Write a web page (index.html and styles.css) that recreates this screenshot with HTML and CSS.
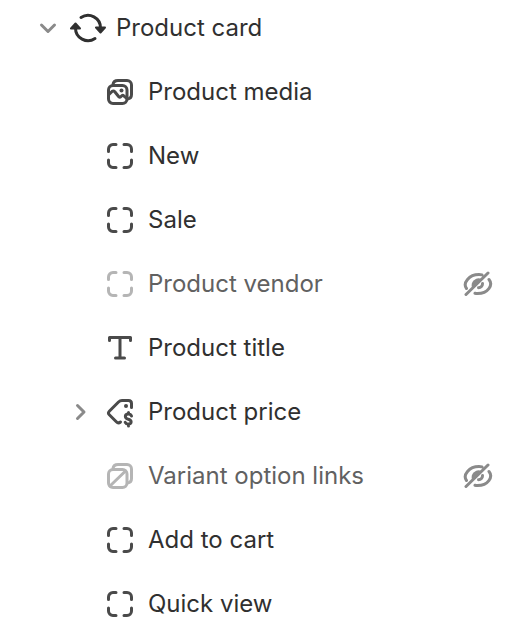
FILE: index.html
```html
<!DOCTYPE html>
<html lang="en">
<head>
    <meta charset="UTF-8">
    <meta name="viewport" content="width=device-width, initial-scale=1.0">
    <title>Product card</title>
    <link rel="stylesheet" href="styles.css">
</head>
<body>
    <!-- Shared icons -->
    <svg class="sprite" aria-hidden="true">
        <symbol id="block" viewBox="0 0 32 32">
            <path d="M4.5 11.5V9A4.5 4.5 0 0 1 9 4.5h3M20 4.5h3A4.5 4.5 0 0 1 27.5 9v2.5M27.5 20v3a4.5 4.5 0 0 1-4.5 4.5h-3M12 27.5H9A4.5 4.5 0 0 1 4.5 23v-3"/>
        </symbol>
        <symbol id="hidden" viewBox="0 0 32 32">
            <path d="M4 26.5 26 5M4.5 20.5C.5 15 7 6.500 17 6.500q1.700 0 3 .4M27 11.500C31.500 17 26 25.500 15.500 25.500q-1.500 0-2.500-.3M20.500 15.500a4 4 0 0 1-4 4.300"/>
            <path class="dot" d="M10 19.500a7 7 0 0 1 9.500-8.500z"/>
        </symbol>
    </svg>

    <ul class="tree">
        <li class="row root">
            <button class="toggle" aria-label="Collapse Product card" aria-expanded="true">
                <svg viewBox="0 0 24 24"><path d="m5.5 9 6.5 6.5L18.5 9"/></svg>
            </button>
            <svg class="icon large" viewBox="0 0 36 36">
                <path d="M11 7.500A12.500 12.500 0 0 1 30.500 18M25 28.500A12.500 12.500 0 0 1 5.500 18"/>
                <path class="head" d="M26 17.5h9l-4.500 5zM1 18.5h9l-4.500-5z"/>
            </svg>
            <span class="label">Product card</span>
        </li>
        <li>
            <ul class="children">
                <li class="row">
                    <svg class="icon" viewBox="0 0 32 32">
                        <rect x="4.5" y="9.5" width="18.5" height="18" rx="4.5"/>
                        <path d="M9 8.5q.5-4 5-4h9A4.5 4.5 0 0 1 27.5 9v9.5q0 4-4 4.5M5 18.5l3-3q1.500-1.200 2.800.3l4 5q1 1 2 0l1-1q1-1 2 0l3 2.700"/>
                        <circle class="dot" cx="17.5" cy="14.5" r="2"/>
                    </svg>
                    <span class="label">Product media</span>
                </li>
                <li class="row">
                    <svg class="icon"><use href="#block"/></svg>
                    <span class="label">New</span>
                </li>
                <li class="row">
                    <svg class="icon"><use href="#block"/></svg>
                    <span class="label">Sale</span>
                </li>
                <li class="row off">
                    <svg class="icon"><use href="#block"/></svg>
                    <span class="label">Product vendor</span>
                    <button class="eye" aria-label="Show Product vendor"><svg><use href="#hidden"/></svg></button>
                </li>
                <li class="row">
                    <svg class="icon" viewBox="0 0 32 32">
                        <path d="M5.5 8.5v-3h21v3M16 5.5V26M11.5 26h9"/>
                    </svg>
                    <span class="label">Product title</span>
                </li>
                <li class="row">
                    <button class="toggle" aria-label="Expand Product price" aria-expanded="false">
                        <svg viewBox="0 0 24 24"><path d="m9.5 5.5 6.5 6.5-6.5 6.5"/></svg>
                    </button>
                    <svg class="icon" viewBox="0 0 32 32">
                        <path d="M27.5 11.5v-4q0-3-3-3H18q-2 0-3.500 1.500L5.300 15.200q-1.800 1.800 0 3.600l7 7q2 2 4.200.2"/>
                        <circle class="dot" cx="22" cy="10" r="2"/>
                        <path d="M27.5 20q-.8-2-3-2c-4.300 0-4 4.500-.3 5.200s4 4.800.3 4.800q-2.500 0-3.300-1.700M24.500 16.500V18M24.500 28v2"/>
                    </svg>
                    <span class="label">Product price</span>
                </li>
                <li class="row off">
                    <svg class="icon" viewBox="0 0 32 32">
                        <rect x="4.5" y="9.5" width="18.5" height="18" rx="4.5"/>
                        <path d="M9 8.5q.5-4 5-4h9A4.5 4.5 0 0 1 27.5 9v9.5q0 4-4 4.5M6 26 21.5 11"/>
                    </svg>
                    <span class="label">Variant option links</span>
                    <button class="eye" aria-label="Show Variant option links"><svg><use href="#hidden"/></svg></button>
                </li>
                <li class="row">
                    <svg class="icon"><use href="#block"/></svg>
                    <span class="label">Add to cart</span>
                </li>
                <li class="row">
                    <svg class="icon"><use href="#block"/></svg>
                    <span class="label">Quick view</span>
                </li>
            </ul>
        </li>
    </ul>
</body>
</html>
```

FILE: styles.css
```css
body {
    margin: 0;
    background-color: #fff;
    color: #303030;
    font-family: Inter, sans-serif;
    font-size: 24px;
    line-height: 32px;
}
ul {
    display: flex;
    flex-direction: column;
    gap: 8px;
    margin: 0;
    padding: 0;
    list-style: none;
}
.sprite {
    display: none;
}
svg {
    display: block;
    flex: none;
    fill: none;
    stroke: currentColor;
    stroke-width: 3;
    stroke-linecap: round;
    stroke-linejoin: round;
}
.row {
    display: grid;
    grid-template-columns: 24px 32px 1fr auto;
    column-gap: 12px;
    align-items: center;
    height: 56px;
    padding: 0 38px 0 68px;
}
.root {
    grid-template-columns: 24px 36px 1fr;
    column-gap: 10px;
    padding-left: 36px;
}
.icon {
    grid-column: 2;
    width: 32px;
    height: 32px;
    color: #4a4a4a;
}
.large {
    width: 36px;
    height: 36px;
    color: #303030;
}
.dot {
    fill: currentColor;
    stroke: none;
}
.head {
    fill: currentColor;
    stroke-width: 2;
}
.label {
    grid-column: 3;
    white-space: nowrap;
}
.off .label {
    color: #616161;
}
.off .icon {
    color: #b5b5b5;
}
button {
    padding: 0;
    border: none;
    background: none;
    color: #8a8a8a;
    cursor: pointer;
}
.toggle svg {
    width: 24px;
    height: 24px;
}
.eye svg {
    width: 32px;
    height: 32px;
}
```
